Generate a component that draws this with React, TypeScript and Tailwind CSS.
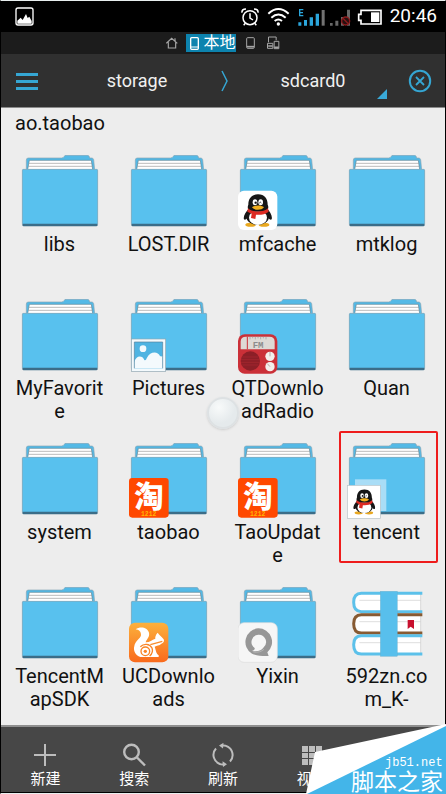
import type { ReactNode } from "react";

const CJK = "font-[Roboto,'Noto_Sans_CJK_SC',sans-serif]";

function Penguin() {
  return (
    <g>
      <ellipse cx="38" cy="102" rx="16" ry="6" fill="#e9a820" />
      <ellipse cx="78" cy="102" rx="16" ry="6" fill="#e9a820" />
      <path d="M34 53C22 64 15 78 18 86C21 90 27 84 31 79L89 79C93 85 98 90 101 86C104 77 97 63 86 53Z" fill="#161616" />
      <ellipse cx="59" cy="78" rx="34" ry="25" fill="#161616" />
      <ellipse cx="60" cy="81" rx="27" ry="22" fill="#fff" />
      <path d="M60 11C40 11 31 24 31 42C27 50 30 60 38 63H82C91 60 93 50 89 42C89 24 80 11 60 11Z" fill="#161616" />
      <ellipse cx="51" cy="35" rx="7" ry="9" fill="#fff" />
      <ellipse cx="68" cy="35" rx="7" ry="9" fill="#fff" />
      <circle cx="53" cy="36" r="3.5" fill="#111" />
      <path d="M64 37q3 -5 6 0" stroke="#111" strokeWidth="2.5" fill="none" />
      <path d="M30 53C44 66 76 66 90 53L92 63C80 72 68 73 54 72L52 85L39 82L41 69L28 63Z" fill="#dd2a22" />
      <path d="M42 50C49 43 71 43 78 50C71 60 49 60 42 50Z" fill="#f2b01e" />
    </g>
  );
}

function QQBadge() {
  return (
    <g transform="translate(0 107)">
      <rect width="118" height="118" rx="18" fill="#fff" />
      <Penguin />
    </g>
  );
}

function PicturesBadge() {
  return (
    <g>
      <rect x="7" y="120" width="103" height="97" fill="#f4fafd" stroke="#8fa6b0" strokeWidth="2" />
      <rect x="16" y="129" width="85" height="79" fill="#4fb4e2" />
      <circle cx="42" cy="149" r="10" fill="#f4fafd" />
      <path d="M16 190C20 169 40 168 46 183C50 186 52 180 54 176C62 158 86 154 93 171C96 173 99 172 101 171V208H16Z" fill="#f4fafd" />
      <path d="M16 208V129H101V208" fill="none" stroke="#55819a" strokeWidth="2" />
    </g>
  );
}

function RadioBadge() {
  return (
    <g transform="translate(0 106)">
      <rect width="118" height="118" rx="20" fill="#cb3038" />
      <path d="M8 45V22Q8 7 24 7H94Q110 7 110 22V45Z" fill="#ded9d5" />
      <path d="M36 7v8M44 7v5M52 7v8M60 7v5M68 7v8M76 7v5M84 7v8" stroke="#999" strokeWidth="2" />
      <path d="M28 7V45" stroke="#cb3038" strokeWidth="3" />
      <text x="44" y="41" fontSize="27" fontWeight="700" fill="#8c8c8c" className="font-['Liberation_Mono',monospace]">FM</text>
      <circle cx="37" cy="80" r="29" fill="#8c1f27" />
      <path d="M13 68h48M9 76h56M9 84h56M13 92h48" stroke="#a92831" strokeWidth="2" />
      <circle cx="96" cy="66" r="14" fill="#f4efec" />
      <circle cx="96" cy="97" r="14" fill="#f4efec" />
      <path d="M96 53v13M96 97l-8 -9" stroke="#b9aaa6" strokeWidth="3" />
    </g>
  );
}

function TaobaoBadge() {
  return (
    <g transform="translate(0 105)">
      <rect width="119" height="119" rx="10" fill="#ff4800" />
      <text x="60" y="86" fontSize="88" fontWeight="900" textAnchor="middle" fill="#fff" className="font-['Noto_Sans_CJK_SC',sans-serif]">淘</text>
      <text x="59" y="113" fontSize="19" fontWeight="700" textAnchor="middle" fill="#ffb400" className="font-['Liberation_Mono',monospace]">1212</text>
    </g>
  );
}

function TencentBadge() {
  return (
    <g>
      <rect x="24" y="109" width="94" height="95" fill="#a9ddf6" />
      <rect x="1" y="127" width="99" height="99" fill="#fff" stroke="#b8c2c6" strokeWidth="2" />
      <g transform="translate(6 131) scale(.77)">
        <Penguin />
      </g>
    </g>
  );
}

function SquirrelBadge() {
  return (
    <g transform="translate(0 107)">
      <defs>
        <linearGradient id="uc" x1="0" y1="0" x2="0" y2="1">
          <stop offset="0" stopColor="#fcb13c" />
          <stop offset="1" stopColor="#f96a1c" />
        </linearGradient>
      </defs>
      <rect width="118" height="119" rx="18" fill="url(#uc)" />
      <path
        d="M20 20C33 10 55 13 60 30C63 43 52 50 50 59C61 60 68 52 79 48C78 43 80 36 86 30C91 37 98 42 104 50C107 56 103 61 97 63C91 69 83 68 77 72C81 82 80 91 89 98L89 103H34C19 98 12 83 16 70C18 56 34 48 36 38C37 27 29 21 20 20Z"
        fill="#fff"
      />
      <path d="M34 72C44 62 62 62 69 76C72 84 69 94 62 100" fill="none" stroke="#f98425" strokeWidth="4" />
      <circle cx="49" cy="86" r="13" fill="none" stroke="#f98425" strokeWidth="4" />
      <path d="M64 66L100 56" stroke="#f98c2b" strokeWidth="4" />
      <circle cx="49" cy="86" r="5" fill="#f98425" />
    </g>
  );
}

function YixinBadge() {
  return (
    <g transform="translate(0 107)">
      <rect width="118" height="119" rx="18" fill="#f6f6f6" stroke="#dcdcdc" strokeWidth="2" />
      <path d="M61 17A41 41 0 0 1 88 89L92 100C74 101 55 99 42 93A41 41 0 0 1 61 17Z" fill="#979797" />
      <path d="M61 36A22 22 0 0 1 76 75C70 83 60 88 42 85C48 83 51 79 50 76A22 22 0 0 1 61 36Z" fill="#f6f6f6" />
      <path d="M46 88C60 90 70 87 78 80" stroke="#b5b5b5" strokeWidth="3" fill="none" />
    </g>
  );
}

function Folder({ children }: { children?: ReactNode }) {
  return (
    <svg viewBox="0 0 240 228" className="h-[76px] w-20 shrink-0" aria-hidden="true">
      <path d="M19 46V15Q19 9 25 9H124Q130 9 132 5Q134 1 138 1H203Q208 1 209 9H215Q220 9 221 14L224 46Z" fill="#54b9e6" stroke="#86a5b3" strokeWidth="2" />
      <path d="M23 44L28 16H214L218 44Z" fill="#fff" stroke="#5d8596" strokeWidth="2" />
      <path d="M26 25H216M25 34H217" stroke="#9a9a9a" strokeWidth="2" />
      <rect x="7" y="43" width="226" height="171" rx="4" fill="#3b6d88" />
      <path d="M7 47Q7 43 11 43H229Q233 43 233 47V206H7Z" fill="#58c1ee" />
      <path d="M7 208V47Q7 43 11 43H229Q233 43 233 47V208" fill="none" stroke="#90b4c4" strokeWidth="2" />
      {children}
    </svg>
  );
}

function Books() {
  const volumes = [
    { y: 53, color: "#5cc1ea" },
    { y: 117, color: "#875a32" },
    { y: 180, color: "#5cc1ea" },
  ];
  return (
    <svg viewBox="51 36 240 228" className="h-[76px] w-20 shrink-0" aria-hidden="true">
      {volumes.map((v) => (
        <g key={v.y} transform={`translate(0 ${v.y})`}>
          <path d="M272 2H90C75 2 71 14 71 29C71 46 77 57 92 57H272Z" fill="#fff" />
          <path d="M88 23H272" stroke="#cfcfcf" strokeWidth="2" />
          <path d="M272 4V56" stroke="#c8c8c8" strokeWidth="2" />
          <path d="M277 2H94C77 2 71 14 71 29C71 46 78 57 94 57H277" fill="none" stroke={v.color} strokeWidth="9" />
        </g>
      ))}
      <path d="M233 135H252V162L242 155L233 162Z" fill="#c8102e" />
      <rect x="151" y="49" width="51" height="195" fill="#58bfec" stroke="#6ba9c4" strokeWidth="1" />
    </svg>
  );
}

const entries: { name: string; badge?: ReactNode; icon?: ReactNode; marked?: boolean }[] = [
  { name: "libs" },
  { name: "LOST.DIR" },
  { name: "mfcache", badge: <QQBadge /> },
  { name: "mtklog" },
  { name: "MyFavorite" },
  { name: "Pictures", badge: <PicturesBadge /> },
  { name: "QTDownloadRadio", badge: <RadioBadge /> },
  { name: "Quan" },
  { name: "system" },
  { name: "taobao", badge: <TaobaoBadge /> },
  { name: "TaoUpdate", badge: <TaobaoBadge /> },
  { name: "tencent", badge: <TencentBadge />, marked: true },
  { name: "TencentMapSDK" },
  { name: "UCDownloads", badge: <SquirrelBadge /> },
  { name: "Yixin", badge: <YixinBadge /> },
  { name: "592zn.com_K-", icon: <Books /> },
];

function StatusBar() {
  return (
    <div className="flex h-[31px] items-center bg-black pr-2 pl-3.5 text-white">
      <svg viewBox="44 22 57 57" className="size-[19px]">
        <rect x="47" y="25" width="51" height="51" rx="6" fill="none" stroke="#fff" strokeWidth="4" />
        <path d="M51 72V63L61 54L67 61L77 43L82 55L87 51L94 64V72Z" fill="#fff" />
      </svg>
      <svg viewBox="51 21 54 57" className="ml-auto h-[19px] w-[18px]" fill="none" stroke="#fff" strokeWidth="4.5">
        <circle cx="78" cy="53" r="21" />
        <path d="M78 40V54L87 60M64 70L59 76M92 70L97 76" />
        <path d="M54 38Q53 27 66 27M102 38Q103 27 90 27" strokeWidth="5" />
      </svg>
      <svg viewBox="129 21 69 57" className="ml-2 h-[19px] w-[23px]" fill="none" stroke="#fff" strokeWidth="6">
        <path d="M133 41Q163 13 194 41M142 53Q163 34 185 53M152 63Q163 54 174 63" />
        <circle cx="163" cy="72" r="5" fill="#fff" stroke="none" />
      </svg>
      <svg viewBox="222 21 81 57" className="ml-2 h-[19px] w-[27px]" fill="#2ba6dc">
        <path d="M225 27H238V31H229V36H237V40H229V45H238V49H225Z" />
        <path d="M223 67H232V77H223ZM240 60H249V77H240ZM257 52H267V77H257ZM275 41H285V77H275Z" />
        <path d="M293 30H302V77H293Z" fill="#727272" />
      </svg>
      <svg viewBox="315 21 66 57" className="ml-1 h-[19px] w-[22px]" fill="#686868">
        <path d="M318 69H326V77H318ZM334 62H343V77H334ZM351 51H360V77H351ZM369 29H378V77H369Z" />
        <circle cx="365" cy="63" r="12" fill="#241010" stroke="#8b1a1c" strokeWidth="4" />
        <path d="M356 54L374 72" stroke="#8b1a1c" strokeWidth="4" />
      </svg>
      <svg viewBox="399 21 75 57" className="ml-1.5 h-[19px] w-[25px]">
        <path d="M411 31H471V72H411V61H404V43H411Z" fill="none" stroke="#fff" strokeWidth="5" />
        <path d="M441 37H466V66H441Z" fill="#fff" />
      </svg>
      <time className="ml-2 text-[19px]">20:46</time>
    </div>
  );
}

function LocationTabs() {
  return (
    <nav className="flex h-[22px] items-center justify-center bg-[#1c1c1c]">
      <button aria-label="Home">
        <svg viewBox="500 111 36 36" className="size-3" fill="none" stroke="#a5a5a5" strokeWidth="3.5">
          <path d="M501 130L517 115L534 130M507 127V144H529V127M527 123V115" />
        </svg>
      </button>
      <button className="ml-2 flex h-[18px] items-center gap-1 bg-[#0d83ae] pl-1 text-base leading-[18px] text-white">
        <svg viewBox="0 0 27 39" className="h-[13px] w-[9px]" fill="none" stroke="#fff" strokeWidth="4">
          <rect x="2" y="2" width="23" height="35" rx="3" />
          <path d="M3 30H24" strokeWidth="3" />
        </svg>
        本地
      </button>
      <button className="ml-2.5" aria-label="Tablet">
        <svg viewBox="0 0 27 36" className="h-3 w-[9px]" fill="none" stroke="#a5a5a5" strokeWidth="3">
          <rect x="2" y="2" width="23" height="32" rx="3" />
          <path d="M3 29H24" strokeWidth="5" />
        </svg>
      </button>
      <button className="ml-3" aria-label="Network">
        <svg viewBox="132 108 38 42" className="h-3.5 w-[13px]" fill="none" stroke="#a5a5a5" strokeWidth="3">
          <path d="M136 127V111H159V121M133 130H149V145H133ZM153 124H167V146H153Z" />
          <path d="M135 138H148M153 142H167" strokeWidth="5" />
        </svg>
      </button>
    </nav>
  );
}

function PathBar() {
  return (
    <header className="flex h-[54px] border-b border-[#8b8b8b] bg-[#303030] text-lg text-[#f0f0f0]">
      <button className="w-[60px] pl-[15px]" aria-label="Menu">
        <svg viewBox="0 0 22 18" className="h-[18px] w-[22px]" fill="#35a6d3">
          <path d="M0 1H22V4H0ZM0 8H22V11H0ZM0 15H22V18H0Z" />
        </svg>
      </button>
      <button className="flex-1">storage</button>
      <span className="flex w-6 items-center justify-center">
        <svg viewBox="0 0 8 22" className="h-[22px] w-2" fill="none" stroke="#35a6d3" strokeWidth="1.5">
          <path d="M1 1L6 11L1 21" />
        </svg>
      </span>
      <button className="relative flex-1">
        sdcard0
        <svg viewBox="0 0 10 10" className="absolute right-0.5 bottom-2 size-2.5" fill="#39a9d8">
          <path d="M10 0V10H0Z" />
        </svg>
      </button>
      <button className="flex w-14 items-center justify-center pl-1.5" aria-label="Close">
        <svg viewBox="0 0 24 24" className="size-6" fill="none" stroke="#35a6d3">
          <circle cx="12" cy="12" r="10.2" strokeWidth="2" />
          <path d="M8 8L16 16M16 8L8 16" strokeWidth="1.8" />
        </svg>
      </button>
    </header>
  );
}

const actions: { label: string; icon: ReactNode }[] = [
  { label: "新建", icon: <path d="M12 1V23M1 12H23" strokeWidth="2" /> },
  {
    label: "搜索",
    icon: (
      <g strokeWidth="2.4">
        <circle cx="9.5" cy="9" r="7.3" />
        <path d="M15 14.500L23 22.500" />
      </g>
    ),
  },
  {
    label: "刷新",
    icon: (
      <g strokeWidth="2">
        <path d="M9.500 21.100A9.500 9.500 0 0 1 5 5.500M10.500 2.600A9.500 9.500 0 0 1 20.800 8M14.800 2.900A9.500 9.500 0 0 1 19 18.500M13.500 21.400A9.500 9.500 0 0 1 6 19.500" />
        <path d="M12.500 -.2L8 2.600L12 5.500ZM11.500 18.300L16 21.200L12 24Z" fill="#bdbdbd" stroke="none" />
      </g>
    ),
  },
  {
    label: "视图",
    icon: (
      <path
        d="M2 3H8V9H2ZM9 3H15V9H9ZM16 3H22V9H16ZM2 10H8V15H2ZM9 10H15V15H9ZM16 10H22V15H16ZM2 16H8V22H2ZM9 16H15V22H9ZM16 16H22V22H16Z"
        fill="#bdbdbd"
        stroke="none"
      />
    ),
  },
];

function ActionBar() {
  return (
    <footer className="relative grid h-[68px] grid-cols-5 border-t-2 border-b border-t-[#8f8f8f] border-b-black bg-[#474747]">
      {actions.map((a) => (
        <button key={a.label} className="flex flex-col items-center gap-0.5 pt-4 text-[15px] leading-5 text-white">
          <svg viewBox="0 0 24 24" className="size-6" fill="none" stroke="#bdbdbd" aria-hidden="true">
            {a.icon}
          </svg>
          {a.label}
        </button>
      ))}
      <svg viewBox="0 0 140 70" className="absolute -right-px -bottom-0.5 h-[70px] w-[140px]">
        <path d="M140 0L9 28L0 70H140Z" fill="#fff" />
        <path d="M140 2L1 70H140Z" fill="#43b5e9" />
        <text x="79" y="42" fontSize="12" fill="#fff" className="font-['Liberation_Mono',monospace]">jb51.net</text>
        <text x="45" y="66" fontSize="23" fill="#fff" className="font-['Noto_Sans_CJK_SC',sans-serif]">脚本之家</text>
      </svg>
    </footer>
  );
}

export default function App() {
  return (
    <div className={`flex min-h-screen flex-col border border-x-black border-y-[#e8eeee] ${CJK}`}>
      <StatusBar />
      <LocationTabs />
      <PathBar />
      <main className="relative flex-1 bg-[#ededed] px-1 pt-1 text-xl leading-[23px] text-[#111]">
        <p className="pl-2.5">ao.taobao</p>
        <div className="mt-3 grid auto-rows-[144px] grid-cols-4">
          {entries.map((e) => (
            <button key={e.name} className="relative flex flex-col items-center gap-0.5 pt-2">
              {e.icon ?? <Folder>{e.badge}</Folder>}
              <span className="w-[94px] text-center break-all">{e.name}</span>
              {e.marked && <span className="absolute -top-1 right-[3px] left-[7px] h-[132px] rounded-xs border-2 border-[#ee1c1c]" />}
            </button>
          ))}
        </div>
        <span className="absolute top-[289px] left-1/2 size-8 -translate-x-1/2 rounded-full border-2 border-[#dde1e3] bg-[radial-gradient(circle_at_35%_30%,#f8fafa,#e5eaec_60%)] shadow-sm" />
      </main>
      <ActionBar />
    </div>
  );
}
